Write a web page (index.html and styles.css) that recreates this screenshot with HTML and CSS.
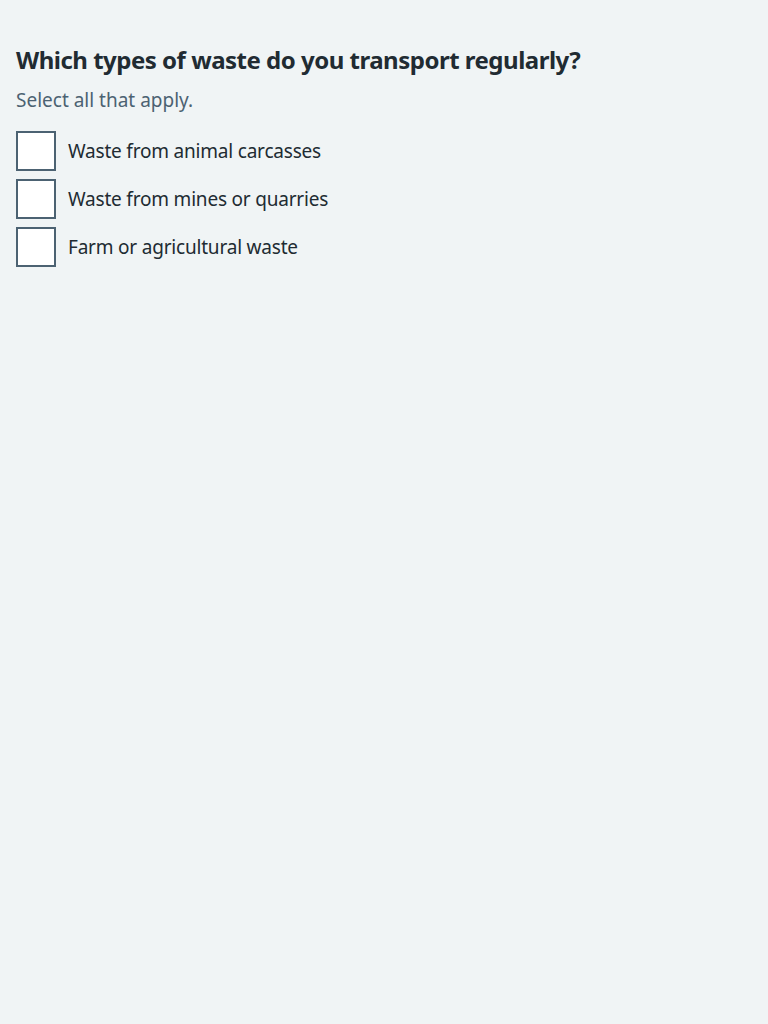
FILE: index.html
```html
<!DOCTYPE html>
<html lang="en">
<head>
<meta charset="utf-8">
<title>Waste types</title>
<link rel="stylesheet" href="styles.css">
</head>
<body>
<main class="page">
  <fieldset class="fieldset">
    <legend class="legend">Which types of waste do you transport regularly?</legend>
    <div class="hint">Select all that apply.</div>
    <div class="checkboxes">
      <label class="item"><span class="box"></span><span class="label">Waste from animal carcasses</span></label>
      <label class="item"><span class="box"></span><span class="label">Waste from mines or quarries</span></label>
      <label class="item"><span class="box"></span><span class="label">Farm or agricultural waste</span></label>
    </div>
  </fieldset>
</main>
</body>
</html>
```
FILE: styles.css
```css
html, body {
  margin: 0;
  padding: 0;
  background: #f0f4f5;
}
body {
  font-family: "Noto Sans", "Open Sans", sans-serif;
  color: #212b32;
}
.page {
  padding: 44px 16px 16px;
}
.fieldset {
  border: 0;
  margin: 0;
  padding: 0;
  min-width: 0;
}
.legend {
  padding: 0;
  font-size: 24px;
  font-weight: 700;
  line-height: 32px;
  letter-spacing: -0.5px;
  margin-bottom: 10px;
}
.hint {
  font-size: 19px;
  line-height: 28px;
  color: #4c6272;
  margin-bottom: 17px;
}
.checkboxes {
  display: flex;
  flex-direction: column;
  gap: 8px;
}
.item {
  display: flex;
  align-items: center;
  gap: 12px;
}
.box {
  box-sizing: border-box;
  width: 40px;
  height: 40px;
  border: 2px solid #4c6272;
  background: #ffffff;
  flex: none;
}
.label {
  font-size: 19px;
  line-height: 28px;
  letter-spacing: -0.2px;
}
```
